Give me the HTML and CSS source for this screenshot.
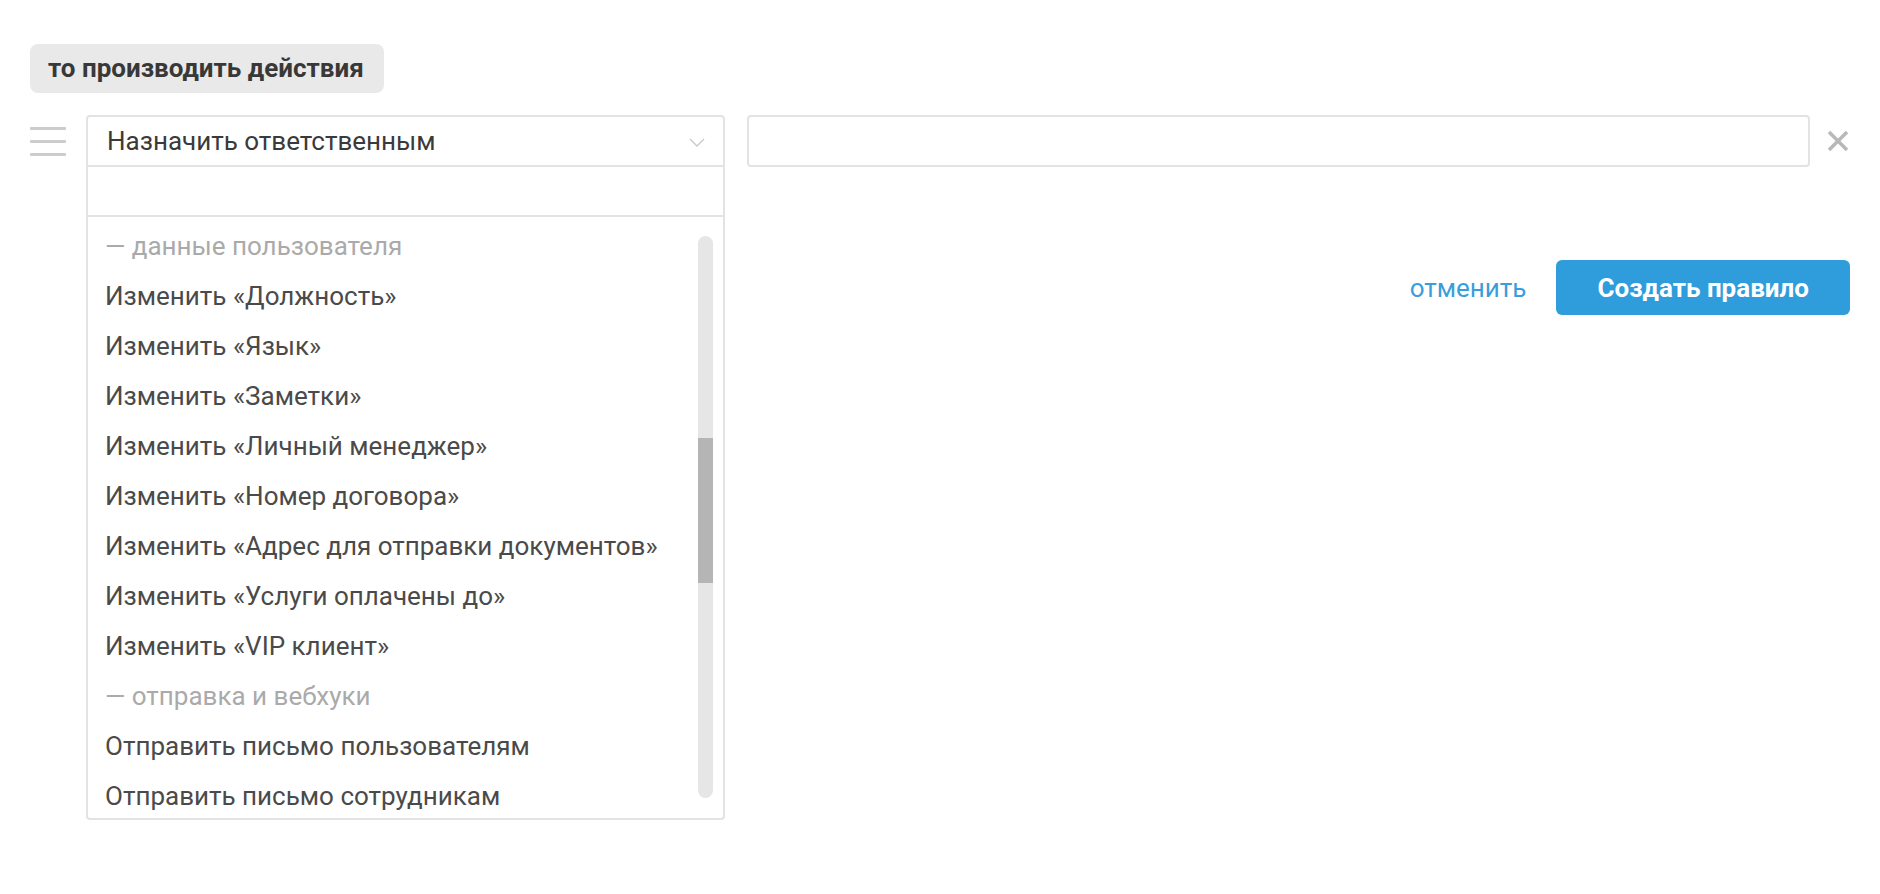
FILE: index.html
```html
<!DOCTYPE html>
<html>
<head>
  <meta charset="UTF-8">
  <meta name="viewport" content="width=device-width, initial-scale=1.0">
  <title>Правило</title>
  <link rel="stylesheet" href="styles.css">
</head>
<body>
  <div class="wrap">
    <span class="tag">то производить действия</span>

    <div class="action-row">
      <span class="drag">
        <i></i><i></i><i></i>
      </span>
      <div class="select">
        <div class="select-head">
          <span>Назначить ответственным</span>
          <svg class="chevron" width="16" height="9" viewBox="0 0 16 9">
            <path d="M1 1 L8 8 L15 1" fill="none" stroke="#c8c8c8" stroke-width="1.3"/>
          </svg>
        </div>
        <div class="dropdown">
          <div class="search"></div>
          <div class="options">
            <ul>
              <li class="group">— данные пользователя</li>
              <li>Изменить «Должность»</li>
              <li>Изменить «Язык»</li>
              <li>Изменить «Заметки»</li>
              <li>Изменить «Личный менеджер»</li>
              <li>Изменить «Номер договора»</li>
              <li>Изменить «Адрес для отправки документов»</li>
              <li>Изменить «Услуги оплачены до»</li>
              <li>Изменить «VIP клиент»</li>
              <li class="group">— отправка и вебхуки</li>
              <li>Отправить письмо пользователям</li>
              <li>Отправить письмо сотрудникам</li>
            </ul>
            <div class="scrollbar"><div class="thumb"></div></div>
          </div>
        </div>
      </div>
      <input type="text" class="value">
      <span class="remove">
        <svg width="22" height="22" viewBox="0 0 22 22">
          <path d="M2 2 L20 20 M20 2 L2 20" stroke="#b8b8b8" stroke-width="3.5"/>
        </svg>
      </span>
    </div>

    <div class="buttons">
      <a href="#" class="cancel">отменить</a>
      <button class="create">Создать правило</button>
    </div>
  </div>
</body>
</html>
```

FILE: styles.css
```css
* {padding: 0; margin: 0;}

html, body {
  width: 100%;
  height: 100%;
  background: #fff;
}
body {
  font-family: Roboto, "Liberation Sans", sans-serif;
  font-size: 26px;
  color: #4a4a4a;
}
.wrap {
  padding: 44px 30px 0;
}
.tag {
  display: inline-block;
  height: 49px;
  line-height: 49px;
  padding: 0 20px 0 18px;
  border-radius: 8px;
  background: #e9e9e9;
  font-size: 26px;
  font-weight: 700;
  color: #383838;
}

/* строка действия */
.action-row {
  display: flex;
  align-items: center;
  margin-top: 22px;
}
.drag {
  display: flex;
  flex-direction: column;
  gap: 10px;
  width: 36px;
  margin-right: 20px;
}
.drag i {
  display: block;
  height: 3px;
  background: #cccccc;
  border-radius: 1px;
}
.select {
  position: relative;
  width: 639px;
  flex: none;
}
.select-head {
  display: flex;
  align-items: center;
  justify-content: space-between;
  height: 52px;
  padding: 0 18px 0 19px;
  border: 2px solid #e3e3e3;
  border-radius: 4px 4px 0 0;
  box-sizing: border-box;
  color: #3a3a3a;
}
.chevron {
  margin-top: 2px;
}
.dropdown {
  position: absolute;
  top: 100%;
  left: 0;
  right: 0;
  border: 2px solid #e3e3e3;
  border-top: 0;
  border-radius: 0 0 4px 4px;
  background: #fff;
  z-index: 10;
}
.search {
  height: 48px;
  border-bottom: 2px solid #e3e3e3;
}
.options {
  display: flex;
  height: 601px;
  overflow: hidden;
}
.options ul {
  flex: 1;
  list-style: none;
  padding-top: 4px;
}
.options li {
  height: 50px;
  line-height: 50px;
  padding-left: 17px;
  white-space: nowrap;
  color: #4a4a4a;
}
.options li.group {
  color: #aaa;
}
.scrollbar {
  width: 15px;
  margin: 19px 10px 20px 0;
  border-radius: 8px;
  background: #e6e6e6;
  overflow: hidden;
}
.scrollbar .thumb {
  height: 145px;
  margin-top: 202px;
  background: #b5b5b5;
}
.value {
  flex: 1;
  height: 52px;
  margin-left: 22px;
  border: 2px solid #e3e3e3;
  border-radius: 4px;
  box-sizing: border-box;
  outline: none;
}
.remove {
  display: flex;
  width: 22px;
  margin: 0 1px 0 17px;
}

/* кнопки */
.buttons {
  display: flex;
  justify-content: flex-end;
  align-items: center;
  gap: 30px;
  margin-top: 93px;
}
.cancel {
  color: #3a9edb;
  text-decoration: none;
}
.create {
  height: 55px;
  padding: 0 41px;
  border: 0;
  border-radius: 6px;
  background: #2f9ddb;
  font-family: Roboto, "Liberation Sans", sans-serif;
  font-size: 26px;
  font-weight: 700;
  color: #fff;
}
```
